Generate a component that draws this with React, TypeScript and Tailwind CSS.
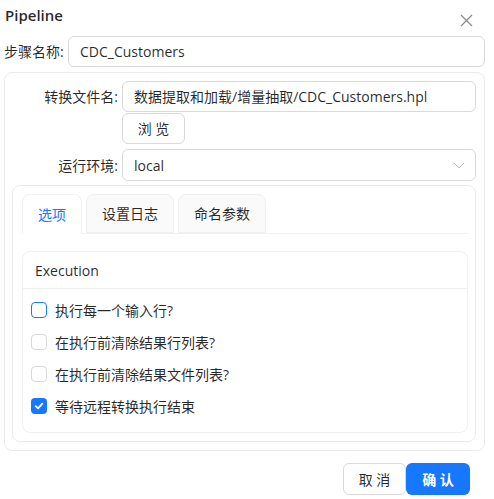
import React from "react";

const font = { fontFamily: '"Open Sans", "Noto Sans CJK SC", sans-serif' };

function Checkbox({ checked, focused }: { checked?: boolean; focused?: boolean }) {
  if (checked) {
    return (
      <span className="w-[16px] h-[16px] rounded-[4px] bg-[#1677ff] flex items-center justify-center shrink-0">
        <svg width="10" height="10" viewBox="0 0 10 10">
          <path d="M1.8 5.2 L4.1 7.4 L8.3 2.7" fill="none" stroke="white" strokeWidth="1.8" strokeLinecap="round" strokeLinejoin="round" />
        </svg>
      </span>
    );
  }
  return (
    <span
      className={
        "w-[16px] h-[16px] rounded-[4px] bg-white shrink-0 border " +
        (focused ? "border-[#1677ff]" : "border-[#d9d9d9]")
      }
    />
  );
}

export default function App() {
  return (
    <div className="w-[494px] h-[499px] bg-white text-[14px] text-[rgba(0,0,0,0.85)]" style={font}>
      {/* header */}
      <div className="h-[32px] flex items-start justify-between pl-[5px] pr-[21px] pt-[4px]">
        <span className="text-[15px] font-semibold leading-[22px] text-[rgba(0,0,0,0.85)]">Pipeline</span>
        <svg className="mt-[10px]" width="13" height="13" viewBox="0 0 13 13">
          <path d="M1 1 L12 12 M12 1 L1 12" stroke="#8c8c8c" strokeWidth="1.3" />
        </svg>
      </div>
      {/* step name */}
      <div className="flex items-center pl-[4px] pr-[9px] mt-[4px]">
        <span className="w-[64px] shrink-0">步骤名称:</span>
        <div className="flex-1 h-[31px] border border-[#d9d9d9] rounded-[6px] px-[11px] flex items-center">CDC_Customers</div>
      </div>
      {/* outer box */}
      <div className="mx-[4px] w-[481px] mt-[5px] h-[379px] border border-[#ebebeb] rounded-[8px] pt-[8px] pr-[8px]">
        <div className="flex items-center">
          <span className="w-[117px] text-right pr-[4px] shrink-0">转换文件名:</span>
          <div className="flex-1 h-[31px] border border-[#d9d9d9] rounded-[6px] px-[11px] flex items-center">
            数据提取和加载/增量抽取/CDC_Customers.hpl
          </div>
        </div>
        <div className="pl-[117px] mt-[1px]">
          <div className="w-[63px] h-[31px] border border-[#d9d9d9] rounded-[6px] flex items-center justify-center">浏 览</div>
        </div>
        <div className="flex items-center mt-[5px]">
          <span className="w-[117px] text-right pr-[4px] shrink-0">运行环境:</span>
          <div className="flex-1 h-[32px] border border-[#d9d9d9] rounded-[6px] pl-[11px] pr-[10px] flex items-center justify-between">
            <span>local</span>
            <svg width="12" height="12" viewBox="0 0 12 12">
              <path d="M1 4 L6 9 L11 4" fill="none" stroke="#bfbfbf" strokeWidth="1" />
            </svg>
          </div>
        </div>
        {/* inner box */}
        <div className="ml-[7px] mt-[4px] h-[257px] border border-[#ebebeb] rounded-[8px] pt-[8px] pl-[9px] pr-[7px]">
          <div className="flex gap-[4px] border-b border-[#f0f0f0] h-[40px]">
            <div className="w-[60px] h-[40px] bg-white border border-[#f0f0f0] border-b-white rounded-t-[8px] flex items-center justify-center text-[#1677ff]">
              选项
            </div>
            <div className="w-[88px] h-[39px] bg-[#fafafa] border border-[#f0f0f0] rounded-t-[8px] flex items-center justify-center">
              设置日志
            </div>
            <div className="w-[88px] h-[39px] bg-[#fafafa] border border-[#f0f0f0] rounded-t-[8px] flex items-center justify-center">
              命名参数
            </div>
          </div>
          {/* card */}
          <div className="mt-[17px] h-[182px] border border-[#f0f0f0] rounded-[8px]">
            <div className="h-[37px] border-b border-[#f0f0f0] flex items-center pl-[12px]">Execution</div>
            <div className="pt-[5px] pl-[8px]">
              <div className="h-[32px] flex items-center gap-[8px]">
                <Checkbox focused />
                <span>执行每一个输入行?</span>
              </div>
              <div className="h-[32px] flex items-center gap-[8px]">
                <Checkbox />
                <span>在执行前清除结果行列表?</span>
              </div>
              <div className="h-[32px] flex items-center gap-[8px]">
                <Checkbox />
                <span>在执行前清除结果文件列表?</span>
              </div>
              <div className="h-[32px] flex items-center gap-[8px]">
                <Checkbox checked />
                <span>等待远程转换执行结束</span>
              </div>
            </div>
          </div>
        </div>
      </div>
      {/* footer */}
      <div className="flex justify-end pr-[24px] mt-[12px]">
        <div className="w-[63px] h-[32px] border border-[#d9d9d9] rounded-[6px] flex items-center justify-center">取 消</div>
        <div className="w-[64px] h-[32px] bg-[#1677ff] rounded-[6px] flex items-center justify-center text-white font-semibold">确 认</div>
      </div>
    </div>
  );
}
